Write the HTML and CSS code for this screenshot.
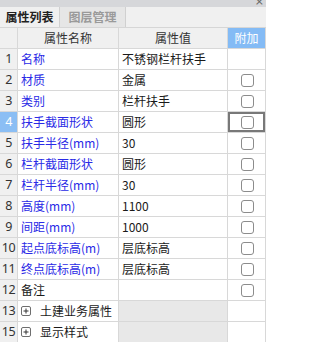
FILE: index.html
```html
<!DOCTYPE html>
<html lang="zh">
<head>
<meta charset="utf-8">
<link rel="stylesheet" href="styles.css">
</head>
<body>
<div class="panel">
  <div class="topbar"><span class="close">×</span></div>
  <div class="tabs">
    <div class="tab active">属性列表</div>
    <div class="tab">图层管理</div>
  </div>
  <div class="grid">
    <div class="row head">
      <div class="c num"></div>
      <div class="c name center">属性名称</div>
      <div class="c val center">属性值</div>
      <div class="c add addhead">附加</div>
    </div>
    <div class="row"><div class="c num">1</div><div class="c name blue">名称</div><div class="c val">不锈钢栏杆扶手</div><div class="c add"></div></div>
    <div class="row"><div class="c num">2</div><div class="c name blue">材质</div><div class="c val">金属</div><div class="c add"><span class="cb"></span></div></div>
    <div class="row"><div class="c num">3</div><div class="c name blue">类别</div><div class="c val">栏杆扶手</div><div class="c add"><span class="cb"></span></div></div>
    <div class="row"><div class="c num sel">4</div><div class="c name blue">扶手截面形状</div><div class="c val">圆形</div><div class="c add focus"><span class="cb"></span></div></div>
    <div class="row"><div class="c num">5</div><div class="c name blue">扶手半径(mm)</div><div class="c val">30</div><div class="c add"><span class="cb"></span></div></div>
    <div class="row"><div class="c num">6</div><div class="c name blue">栏杆截面形状</div><div class="c val">圆形</div><div class="c add"><span class="cb"></span></div></div>
    <div class="row"><div class="c num">7</div><div class="c name blue">栏杆半径(mm)</div><div class="c val">30</div><div class="c add"><span class="cb"></span></div></div>
    <div class="row"><div class="c num">8</div><div class="c name blue">高度(mm)</div><div class="c val">1100</div><div class="c add"><span class="cb"></span></div></div>
    <div class="row"><div class="c num">9</div><div class="c name blue">间距(mm)</div><div class="c val">1000</div><div class="c add"><span class="cb"></span></div></div>
    <div class="row"><div class="c num">10</div><div class="c name blue">起点底标高(m)</div><div class="c val">层底标高</div><div class="c add"><span class="cb"></span></div></div>
    <div class="row"><div class="c num">11</div><div class="c name blue">终点底标高(m)</div><div class="c val">层底标高</div><div class="c add"><span class="cb"></span></div></div>
    <div class="row"><div class="c num">12</div><div class="c name">备注</div><div class="c val"></div><div class="c add"><span class="cb"></span></div></div>
    <div class="row"><div class="c num">13</div><div class="c name grp"><svg class="plus" width="10" height="10" viewBox="0 0 10 10"><rect x="0.5" y="0.5" width="9" height="9" rx="1.5" fill="#fff" stroke="#6e6e6e"/><path d="M2.5 5h5M5 2.5v5" stroke="#333" stroke-width="1"/></svg>土建业务属性</div><div class="c val gray"></div><div class="c add"></div></div>
    <div class="row"><div class="c num">15</div><div class="c name grp"><svg class="plus" width="10" height="10" viewBox="0 0 10 10"><rect x="0.5" y="0.5" width="9" height="9" rx="1.5" fill="#fff" stroke="#6e6e6e"/><path d="M2.5 5h5M5 2.5v5" stroke="#333" stroke-width="1"/></svg>显示样式</div><div class="c val gray"></div><div class="c add"></div></div>
  </div>
</div>
</body>
</html>
```
FILE: styles.css
```css
* { box-sizing: border-box; }
html, body { margin: 0; padding: 0; background: #ffffff; }
body {
  font-family: "Noto Sans CJK SC", "Noto Sans", sans-serif;
  font-size: 12px;
  color: #1a1a1a;
}
.panel { width: 266px; height: 342px; overflow: hidden; }
.topbar {
  height: 7px;
  background: #d6d7da;
  overflow: hidden;
  display: flex;
  justify-content: flex-end;
}
.close {
  font-family: "DejaVu Sans", sans-serif;
  font-size: 11px;
  line-height: 4px;
  color: #666;
  padding-right: 2px;
}
.tabs {
  height: 21px;
  background: #f0f0f0;
  display: flex;
  border-bottom: 1px solid #d6d6d6;
}
.tab {
  height: 20px;
  line-height: 20px;
  font-weight: bold;
  font-size: 12px;
  text-align: center;
}
.tab.active { width: 60px; color: #222; border-right: 1px solid #d0d0d0; }
.tab:not(.active) { width: 66px; color: #9a9a9a; background: #e6e6e6; border-right: 1px solid #d0d0d0; }
.row {
  display: flex;
  height: 21px;
  border-bottom: 1px solid #d8d8d8;
}
.c {
  height: 20px;
  line-height: 20px;
  border-right: 1px solid #d8d8d8;
  white-space: nowrap;
  overflow: hidden;
  padding-left: 3px;
}
.num {
  width: 18px;
  padding-left: 0;
  text-align: center;
  background: #f0f0f0;
  font-family: "Noto Sans", sans-serif;
  font-size: 12.5px;
  color: #333;
  letter-spacing: -0.5px;
}
.num.sel { background: #8bbef4; color: #fff; }
.name { width: 101px; }
.val { width: 109px; }
.add {
  width: 38px;
  padding-left: 0;
  display: flex;
  align-items: center;
  justify-content: center;
}
.head .c { background: #f0f0f0; color: #333; }
.head .center { text-align: center; padding-left: 0; }
.head .add.addhead { background: #84bbf5; color: #fff; }
.blue { color: #2a2ae6; }
.gray { background: #e8e8e8; }
.cb {
  width: 13px;
  height: 13px;
  border: 1px solid #8c8c8c;
  border-radius: 3px;
  background: #fff;
  margin-left: 1px;
}
.focus { box-shadow: inset 0 0 0 2px #787878; }
.grp { display: flex; align-items: center; }
.plus { flex: none; margin-right: 9px; }
```
